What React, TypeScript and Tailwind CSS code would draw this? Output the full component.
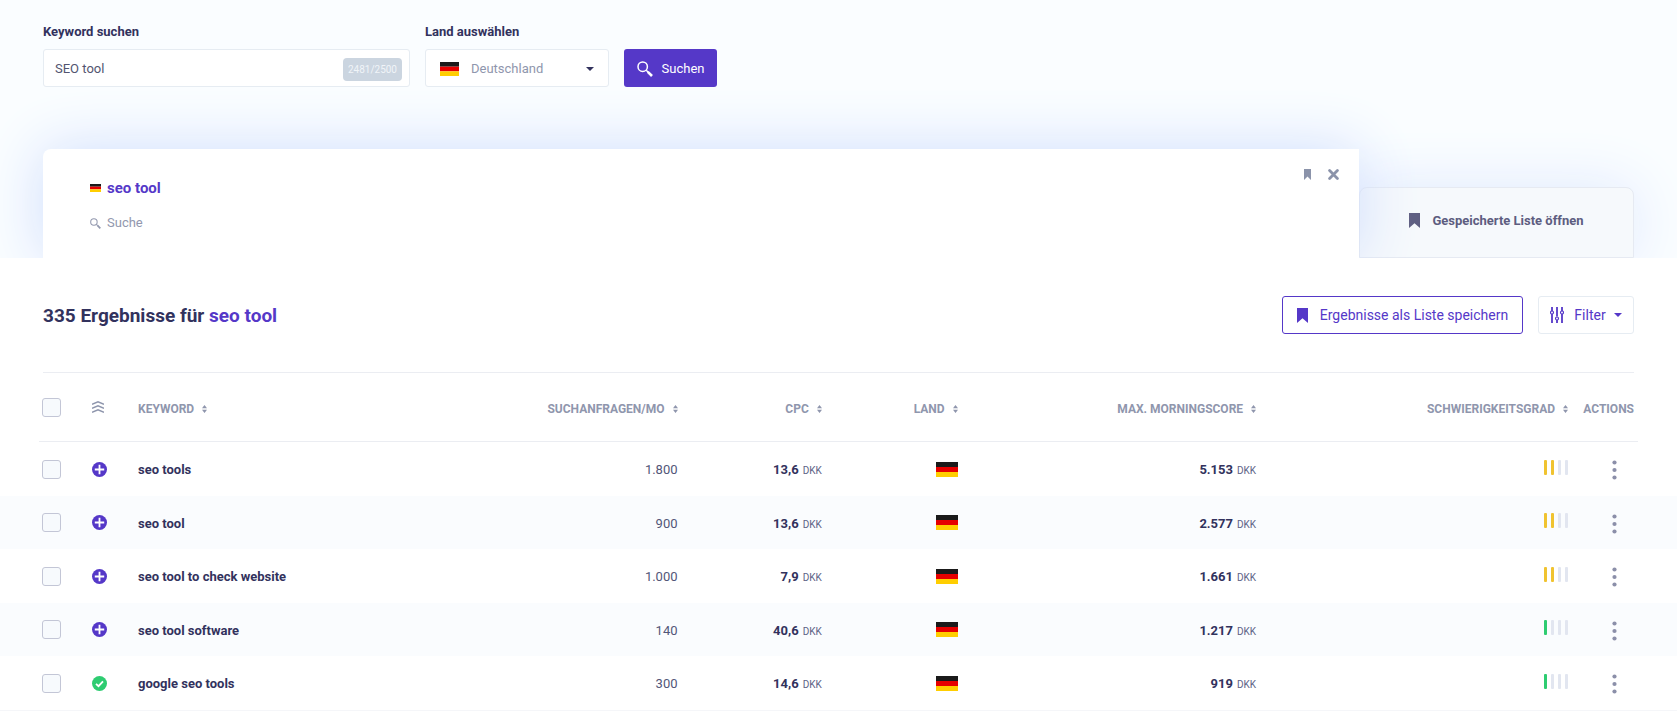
const keywords = [
    { id: 1, name: "seo tools", volume: "1.800", cpc: "13,6", score: "5.153", difficulty: 2, added: false },
    { id: 2, name: "seo tool", volume: "900", cpc: "13,6", score: "2.577", difficulty: 2, added: false },
    { id: 3, name: "seo tool to check website", volume: "1.000", cpc: "7,9", score: "1.661", difficulty: 2, added: false },
    { id: 4, name: "seo tool software", volume: "140", cpc: "40,6", score: "1.217", difficulty: 1, added: false },
    { id: 5, name: "google seo tools", volume: "300", cpc: "14,6", score: "919", difficulty: 1, added: true },
];

function Flag({ className }: { className: string }) {
    return (
        <svg viewBox="0 0 22 15" preserveAspectRatio="none" className={className} role="img" aria-label="Deutschland">
            <rect width="22" height="5" fill="#1a1a1a" />
            <rect y="5" width="22" height="5" fill="#e60000" />
            <rect y="10" width="22" height="5" fill="#ffce00" />
        </svg>
    );
}

function SearchIcon({ className }: { className: string }) {
    return (
        <svg viewBox="0 0 16 16" className={className} fill="none" stroke="currentColor" aria-hidden="true">
            <circle cx="5.7" cy="5.7" r="4.7" strokeWidth="1.5" />
            <path d="M9.2 9.2l2 2" strokeWidth="1.5" />
            <path d="M10.8 10.8l4.2 4.2" strokeWidth="2.6" />
        </svg>
    );
}

function Bookmark({ className }: { className: string }) {
    return (
        <svg viewBox="0 0 11 16" preserveAspectRatio="none" className={className} fill="currentColor" aria-hidden="true">
            <path d="M0 0h11v16l-5.5-5L0 16z" />
        </svg>
    );
}

function Caret({ className }: { className: string }) {
    return (
        <svg viewBox="0 0 8 4" className={className} fill="currentColor" aria-hidden="true">
            <path d="M0 0h8L4 4z" />
        </svg>
    );
}

function SortIcon() {
    return (
        <svg viewBox="0 0 5 8" className="h-2 w-[5px] shrink-0" fill="currentColor" aria-hidden="true">
            <path d="M2.5 0L5 3.2H0zM2.5 8L5 4.8H0z" />
        </svg>
    );
}

function SortHeader({ label, right = true }: { label: string; right?: boolean }) {
    return (
        <th scope="col" className="border-b border-[#ebedf2] p-0 pt-[3px]">
            <button type="button" className={`flex w-full items-center gap-2 whitespace-nowrap ${right ? "justify-end" : ""}`}>
                {label}
                <SortIcon />
            </button>
        </th>
    );
}

function Checkbox({ label }: { label: string }) {
    return (
        <input
            type="checkbox"
            aria-label={label}
            className="ml-[3px] block size-[19px] appearance-none rounded-[3px] border border-[#c3c6d6] bg-[#f7fafd] checked:bg-[#5538c8]"
        />
    );
}

function Status({ added }: { added: boolean }) {
    return (
        <svg viewBox="0 0 15 15" className="block size-[15px]" fill="none" stroke="white" aria-hidden="true">
            <circle cx="7.5" cy="7.5" r="7.5" fill={added ? "#2ecc71" : "#5538c8"} stroke="none" />
            {added ? <path d="M4 7.8l2.5 2.4L11 5.4" strokeWidth="1.8" /> : <path d="M7.5 2.8v9.4M2.8 7.5h9.4" strokeWidth="1.8" />}
        </svg>
    );
}

function Difficulty({ level }: { level: number }) {
    const color = level > 1 ? "bg-[#f0c330]" : "bg-[#2ecc71]";
    return (
        <div className="mb-1 flex justify-end gap-1" role="img" aria-label={`${level} / 4`}>
            {[1, 2, 3, 4].map((step) => (
                <span key={step} className={`h-[15px] w-[3px] rounded-[1px] ${step <= level ? color : "bg-[#e2e6f0]"}`} />
            ))}
        </div>
    );
}

function Amount({ value }: { value: string }) {
    return (
        <td className="p-0 text-right whitespace-nowrap">
            <span className="text-[13px] font-bold">{value}</span> <span className="text-[10px] text-[#5d6286]">DKK</span>
        </td>
    );
}

export default function App() {
    return (
        <div className="min-h-screen bg-white font-[Roboto,sans-serif] text-[#32325d]">
            <section className="overflow-hidden bg-[#fafdff] px-[43px] pt-[23px]">
                <form className="flex items-end gap-[15px]" onSubmit={(e) => e.preventDefault()}>
                    <div className="w-[367px]">
                        <label htmlFor="keyword" className="block text-[13px] leading-[18px] font-bold">
                            Keyword suchen
                        </label>
                        <div className="mt-2 flex h-[38px] items-center rounded-[3px] border border-[#e6ecf2] bg-white pt-[2px] pr-[7px] pl-[11px]">
                            <input
                                id="keyword"
                                type="text"
                                defaultValue="SEO tool"
                                className="min-w-0 flex-1 text-[13px] text-[#525470] outline-none"
                            />
                            <span className="rounded bg-[#cbd5e0] px-[5px] text-[10px] leading-[23px] text-[#f0f4f8]">2481/2500</span>
                        </div>
                    </div>
                    <div className="w-[184px]">
                        <label htmlFor="country" className="block text-[13px] leading-[18px] font-bold">
                            Land auswählen
                        </label>
                        <div className="mt-2 flex h-[38px] items-center rounded-[3px] border border-[#e6ecf2] bg-white px-[14px] pt-[2px]">
                            <Flag className="h-[14px] w-[19px]" />
                            <select id="country" className="ml-3 min-w-0 flex-1 appearance-none text-[13px] text-[#8f96ad] outline-none">
                                <option>Deutschland</option>
                            </select>
                            <Caret className="h-1 w-2" />
                        </div>
                    </div>
                    <button
                        type="submit"
                        className="flex h-[38px] w-[93px] items-center justify-center gap-[9px] rounded-[3px] bg-[#5538c8] pt-[2px] text-[13px] text-white"
                    >
                        <SearchIcon className="size-4" />
                        Suchen
                    </button>
                </form>

                <div className="mt-[62px] flex items-end">
                    <div className="relative z-10 h-[109px] flex-1 rounded-tl-lg bg-white pt-7 pl-[47px] shadow-[0_0_60px_#cfddfc]">
                        <div className="flex items-center gap-[6px] leading-[22px]">
                            <Flag className="h-2 w-[11px]" />
                            <a href="#seo-tool" className="text-[15px] font-bold text-[#5538c8]">
                                seo tool
                            </a>
                        </div>
                        <div className="mt-[13px] flex items-center gap-[6px] text-[13px] leading-[22px] text-[#9298ae]">
                            <SearchIcon className="size-[11px]" />
                            Suche
                        </div>
                        <div className="absolute top-5 right-5 flex items-center gap-[17px] text-[#8b93aa]">
                            <button type="button" aria-label="Speichern">
                                <Bookmark className="block h-[11px] w-[7px]" />
                            </button>
                            <button type="button" aria-label="Schließen">
                                <svg viewBox="0 0 11 11" className="block size-[11px]" stroke="currentColor" strokeWidth="2.8" strokeLinecap="round">
                                    <path d="M1.6 1.6l7.8 7.8M9.4 1.6L1.6 9.4" />
                                </svg>
                            </button>
                        </div>
                    </div>
                    <button
                        type="button"
                        className="flex h-[71px] w-[275px] items-center justify-center gap-3 rounded-t-lg border border-[#e6eaf2] bg-[#f6f9fc] pb-1 text-[13px] font-bold text-[#5d5d80] shadow-[0_0_60px_#dfe9fd]"
                    >
                        <Bookmark className="h-[15px] w-[11px]" />
                        Gespeicherte Liste öffnen
                    </button>
                </div>
            </section>

            <main>
                <div className="mx-[43px] flex items-center justify-between border-b border-[#ebedf2] py-[38px] text-[#5538c8]">
                    <h1 className="pt-[2px] text-[19px] font-bold">
                        <span className="text-[#32325d]">335 Ergebnisse für</span> seo tool
                    </h1>
                    <div className="flex gap-[15px]">
                        <button
                            type="button"
                            className="flex h-[38px] w-[241px] items-center justify-center gap-3 rounded-[3px] border border-[#5538c8] text-sm"
                        >
                            <Bookmark className="h-[15px] w-[11px]" />
                            Ergebnisse als Liste speichern
                        </button>
                        <button
                            type="button"
                            className="flex h-[38px] w-[96px] items-center justify-center rounded-[3px] border border-[#e6ecf2] text-sm"
                        >
                            <svg viewBox="0 0 14 16" className="mr-[10px] h-4 w-[14px]" fill="none" stroke="currentColor" aria-hidden="true">
                                <path d="M2 0v4M2 7v9M7 0v9.5M7 13v3M12 0v4M12 7v9" strokeWidth="1.8" />
                                <circle cx="2" cy="5.5" r="1.5" strokeWidth="1.2" />
                                <circle cx="7" cy="11.5" r="1.5" strokeWidth="1.2" />
                                <circle cx="12" cy="5.5" r="1.5" strokeWidth="1.2" />
                            </svg>
                            Filter
                            <Caret className="ml-2 h-1 w-2" />
                        </button>
                    </div>
                </div>

                <table className="w-full table-fixed border-separate border-spacing-0 text-left">
                    <colgroup>
                        <col className="w-[39px]" />
                        <col className="w-[53px]" />
                        <col className="w-[46px]" />
                        <col />
                        <col className="w-[12%]" />
                        <col className="w-[8.6%]" />
                        <col className="w-[8.1%]" />
                        <col className="w-[17.8%]" />
                        <col className="w-[18.6%]" />
                        <col className="w-[70px]" />
                        <col className="w-[39px]" />
                    </colgroup>
                    <thead className="text-xs text-[#8f96ad]">
                        <tr className="h-[69px]">
                            <td />
                            <th scope="col" className="border-b border-[#ebedf2] p-0">
                                <Checkbox label="Alle auswählen" />
                            </th>
                            <th scope="col" className="border-b border-[#ebedf2] p-0">
                                <svg viewBox="0 0 12 12" className="block size-3" fill="none" stroke="currentColor" strokeWidth="1.5" aria-label="Rang">
                                    <path d="M0 3.3L6 .9l6 2.4M0 7.3l6-2.4 6 2.4M0 11.3l6-2.4 6 2.4" />
                                </svg>
                            </th>
                            <SortHeader label="KEYWORD" right={false} />
                            <SortHeader label="SUCHANFRAGEN/MO" />
                            <SortHeader label="CPC" />
                            <SortHeader label="LAND" />
                            <SortHeader label="MAX. MORNINGSCORE" />
                            <SortHeader label="SCHWIERIGKEITSGRAD" />
                            <th scope="col" className="border-b border-[#ebedf2] p-0 pt-[3px] pr-1 text-right">
                                ACTIONS
                            </th>
                            <td />
                        </tr>
                    </thead>
                    <tbody>
                        {keywords.map((keyword) => (
                            <tr key={keyword.id} className="h-[54px] even:h-[53px] even:bg-[#fafcfe]">
                                <td />
                                <td className="p-0">
                                    <Checkbox label={keyword.name} />
                                </td>
                                <td className="p-0">
                                    <button type="button" aria-label="Keyword verfolgen" className="block">
                                        <Status added={keyword.added} />
                                    </button>
                                </td>
                                <td className="p-0 pt-[2px] text-[13px] font-bold">{keyword.name}</td>
                                <td className="p-0 pt-[2px] text-right text-[13px] text-[#525678]">{keyword.volume}</td>
                                <Amount value={keyword.cpc} />
                                <td className="p-0">
                                    <Flag className="ml-auto block h-[15px] w-[22px]" />
                                </td>
                                <Amount value={keyword.score} />
                                <td className="p-0">
                                    <Difficulty level={keyword.difficulty} />
                                </td>
                                <td className="p-0 pt-[2px] pr-[21px]">
                                    <button type="button" aria-label="Aktionen" className="ml-auto block">
                                        <svg viewBox="0 0 5 20" className="block h-5 w-[5px]" fill="#8b8fa9">
                                            <circle cx="2.5" cy="2.5" r="2.1" />
                                            <circle cx="2.5" cy="10" r="2.1" />
                                            <circle cx="2.5" cy="17.5" r="2.1" />
                                        </svg>
                                    </button>
                                </td>
                                <td />
                            </tr>
                        ))}
                    </tbody>
                    <tfoot>
                        <tr>
                            <td colSpan={11} className="border-t border-[#f5f6f9] p-0" />
                        </tr>
                    </tfoot>
                </table>
            </main>
        </div>
    );
}
